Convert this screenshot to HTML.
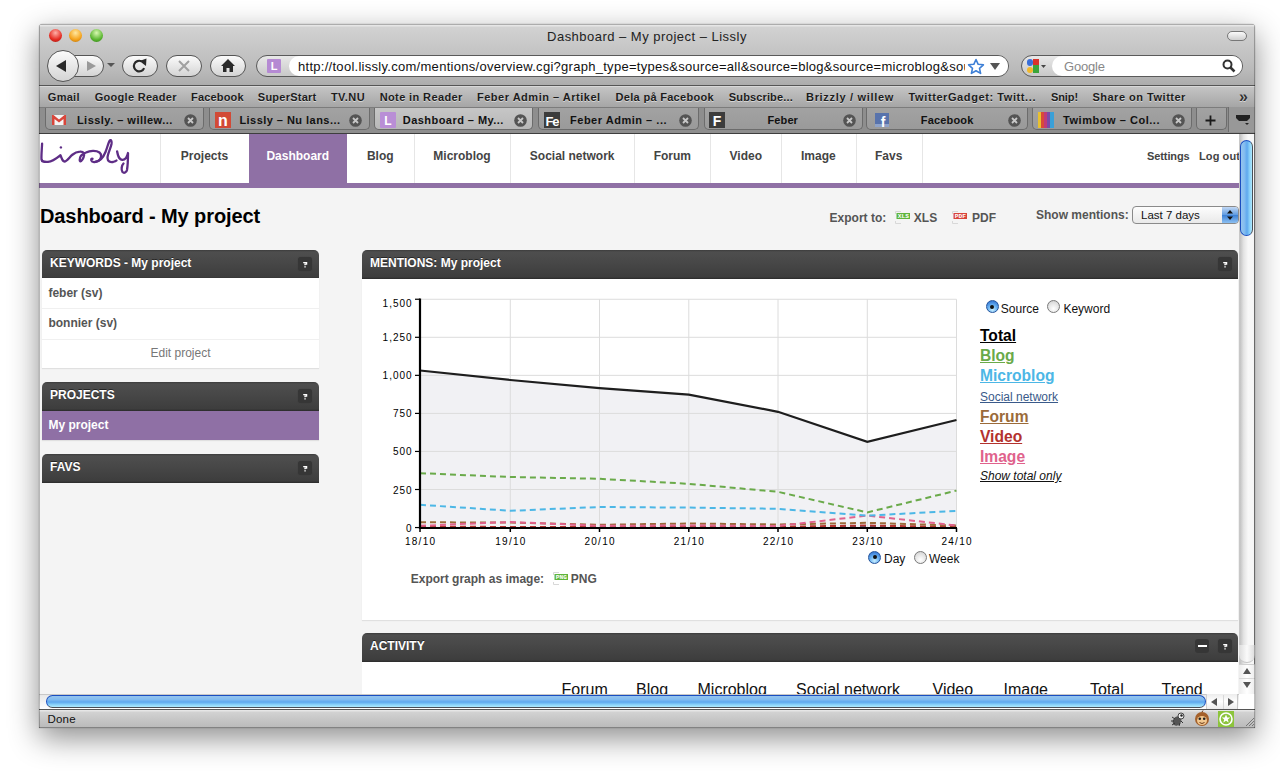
<!DOCTYPE html>
<html><head><meta charset="utf-8">
<style>
*{box-sizing:border-box}
html,body{margin:0;padding:0}
body{width:1280px;height:782px;background:#fff;position:relative;overflow:hidden;font-family:"Liberation Sans",sans-serif}
.a{position:absolute}
#win{left:39px;top:24px;width:1216px;height:703.5px;background:#a8a8a8;border-radius:4px 4px 0 0;box-shadow:0 0 1px rgba(0,0,0,.5),0 10px 30px rgba(0,0,0,.45);overflow:hidden}
#tb{left:0;top:0;width:1216px;height:62px;background:linear-gradient(#acacac 0,#acacac 1px,#e6e6e6 1px,#e6e6e6 2px,#d2d2d2 3px,#bababa 75%,#acacac);border-bottom:1px solid #555}
#bm{left:0;top:62px;width:1216px;height:21px;background:linear-gradient(#c4c4c4,#a6a6a6);border-top:1px solid #d8d8d8}
#tabs{z-index:2;left:0;top:83px;width:1216px;height:26.5px;background:#8e8e8e;border-top:1px solid #7c7c7c;border-bottom:1px solid #3e3e3e}
#content{left:0;top:109px;width:1200px;height:561px;background:#f4f4f4;overflow:hidden}
#vscroll{left:1200px;top:109px;width:16px;height:561px;background:linear-gradient(90deg,#c2c2c2,#e4e4e4 25%,#f8f8f8 55%,#f6f6f6 90%,#8c8c8c 94%);border-left:1px solid #c8c8c8}
#hscroll{left:0;top:670px;width:1200px;height:15px;background:linear-gradient(#e8e8e8,#fff);border-top:1px solid #c8c8c8}
#status{left:0;top:685px;width:1216px;height:18.5px;background:linear-gradient(#e6e6e6 0,#e6e6e6 1px,#d2d2d2 2px,#b9b9b9);border-top:1px solid #555;font-size:11px;color:#111}
.btn{background:linear-gradient(#fbfbfb,#d4d4d4);border:1px solid #555;border-radius:12px}
.bmi{top:0;font-size:11px;font-weight:bold;color:#1c1c1c;line-height:21px;text-shadow:0 1px 0 rgba(255,255,255,.5)}
.tab{top:0;height:21.5px;background:linear-gradient(#a2a2a2,#9a9a9a);border:1px solid #6c6c6c;border-top:none;border-radius:0 0 5px 5px;font-size:12px;color:#111;line-height:20px}
.tab.act{background:linear-gradient(#c6c6c6,#b8b8b8)}
.tabt{top:3.8px;font-size:11px;font-weight:bold;color:#111;line-height:16px;white-space:nowrap}
.nv{font-size:12px;font-weight:bold;color:#444;line-height:16px;white-space:nowrap}
.gt{font-size:12px;font-weight:bold;color:#555;line-height:14px;white-space:nowrap}
.hd{height:28.5px;border-radius:5px 5px 0 0;background:linear-gradient(#3c3c3c 0,#4e4e4e 2px,#484848 40%,#3d3d3d 93%,#2a2a2a 100%);color:#fff;font-size:12px;font-weight:bold;line-height:14px;padding:6px 0 0 8px;text-shadow:0 -1px 0 rgba(0,0,0,.5)}
.hp{width:14px;height:14px;border-radius:3px;background:#363636;box-shadow:0 0 1px #363636}
.yl{font-size:10px;letter-spacing:1px;color:#000;line-height:12px;white-space:nowrap}
.xl{width:60px;text-align:center;font-size:10px;letter-spacing:1.3px;color:#000;line-height:12px;white-space:nowrap;text-indent:1.3px}
.rt{font-size:12px;color:#111;line-height:14px;white-space:nowrap}
.lg{font-size:15.6px;font-weight:bold;line-height:18px;text-decoration:underline;white-space:nowrap}
.tx{position:absolute;width:14px;height:14px;border-radius:7px;background:#666;color:#c8c8c8;font-size:11px;line-height:14px;text-align:center;top:3px}
</style></head><body>
<div id="win" class="a">
 <div id="tb" class="a">
  <div class="a" style="left:10px;top:5px;width:13px;height:13px;border-radius:50%;background:radial-gradient(circle at 50% 30%,#ffb0a8,#e52b22 60%,#9a1a10)"></div>
  <div class="a" style="left:30px;top:5px;width:13px;height:13px;border-radius:50%;background:radial-gradient(circle at 50% 30%,#ffe8a0,#f5a31c 60%,#b06a08)"></div>
  <div class="a" style="left:51px;top:5px;width:13px;height:13px;border-radius:50%;background:radial-gradient(circle at 50% 30%,#d8f8b0,#5cb732 60%,#2e7a14)"></div>
  <div class="a" style="left:0;top:5.5px;width:1216px;text-align:center;font-size:13px;color:#222;line-height:14px;padding-left:0px;letter-spacing:0.48px">Dashboard – My project – Lissly</div>
  <div class="a" style="left:1188px;top:7px;width:20px;height:10px;border-radius:5px;border:1px solid #777;background:linear-gradient(#fafafa,#cfcfcf)"></div>
  <!-- nav buttons -->
  <div class="a btn" style="left:31px;top:31px;width:34px;height:22px;border-radius:0 11px 11px 0"></div>
  <svg class="a" style="left:45px;top:36px" width="14" height="12"><path d="M3 1 L12 6 L3 11 Z" fill="#9a9a9a"/></svg>
  <div class="a btn" style="left:8px;top:26px;width:32px;height:32px;border-radius:50%"></div>
  <svg class="a" style="left:15px;top:35px" width="16" height="14"><path d="M12 1 L2 7 L12 13 Z" fill="#2a2a2a"/></svg>
  <svg class="a" style="left:67px;top:38px" width="10" height="6"><path d="M1 1 L9 1 L5 5 Z" fill="#555"/></svg>
  <div class="a btn" style="left:83px;top:31px;width:36px;height:22px"></div>
  <svg class="a" style="left:92px;top:33px" width="18" height="18"><path d="M13.1 11.1 A5.3 5.3 0 1 1 10.5 4.3" fill="none" stroke="#2a2a2a" stroke-width="2.2"/><path d="M8.5 4 L15.5 1.5 L15 9 Z" fill="#2a2a2a"/></svg>
  <div class="a btn" style="left:127px;top:31px;width:36px;height:22px"></div>
  <svg class="a" style="left:138px;top:35px" width="14" height="14"><path d="M2 2 L12 12 M12 2 L2 12" stroke="#a0a0a0" stroke-width="2"/></svg>
  <div class="a btn" style="left:171px;top:31px;width:36px;height:22px"></div>
  <svg class="a" style="left:181px;top:34px" width="16" height="15"><path d="M8 1 L15 8 L13 8 L13 14 L9.5 14 L9.5 10 L6.5 10 L6.5 14 L3 14 L3 8 L1 8 Z" fill="#2a2a2a"/></svg>
  <!-- url bar -->
  <div class="a" style="left:217px;top:31px;width:753px;height:22px;border-radius:11px;border:1px solid #5a5a5a;background:linear-gradient(#e8e8e8,#c8c8c8)"></div>
  <div class="a" style="left:250px;top:32px;width:719px;height:20px;border-radius:10px;background:#fff"></div>
  <div class="a" style="left:228px;top:35px;width:14px;height:14px;background:#b58ad3;color:#fff;font-size:11px;font-weight:bold;line-height:14px;text-align:center;border-radius:1px">L</div>
  <div class="a" style="left:259px;top:35px;width:667px;overflow:hidden;white-space:nowrap;font-size:13px;color:#111;line-height:16px;letter-spacing:0.28px">http://tool.lissly.com/mentions/overview.cgi?graph_type=types&amp;source=all&amp;source=blog&amp;source=microblog&amp;source</div>
  <svg class="a" style="left:928px;top:34px" width="18" height="17"><path d="M9 1.5 L11.2 6.3 L16.4 6.8 L12.5 10.3 L13.6 15.4 L9 12.8 L4.4 15.4 L5.5 10.3 L1.6 6.8 L6.8 6.3 Z" fill="none" stroke="#3d7fd6" stroke-width="1.6" stroke-linejoin="round"/></svg>
  <svg class="a" style="left:950px;top:38px" width="12" height="9"><path d="M1 1 L11 1 L6 8 Z" fill="#555"/></svg>
  <!-- search -->
  <div class="a" style="left:982px;top:31px;width:222px;height:22px;border-radius:11px;border:1px solid #5a5a5a;background:linear-gradient(#e8e8e8,#c8c8c8)"></div>
  <div class="a" style="left:1013px;top:32px;width:190px;height:20px;border-radius:10px;background:#fff"></div>
  <svg class="a" style="left:987px;top:34px" width="22" height="16"><rect x="1" y="1" width="6" height="7" rx="3" fill="#3a6fd8"/><rect x="7" y="1" width="6" height="6" fill="#d8322a"/><rect x="7" y="7" width="6" height="8" fill="#3aa53a"/><rect x="1" y="9" width="6" height="6" rx="3" fill="#f2b82a"/><path d="M15 7 L20 7 L17.5 10 Z" fill="#444"/></svg>
  <div class="a" style="left:1025px;top:35px;font-size:13px;color:#888;line-height:16px;letter-spacing:-0.2px">Google</div>
  <svg class="a" style="left:1183px;top:35px" width="14" height="14"><circle cx="5.5" cy="5.5" r="4" fill="none" stroke="#333" stroke-width="2"/><path d="M8.5 8.5 L12.5 12.5" stroke="#333" stroke-width="2.5"/></svg>
 </div>
 <div id="bm" class="a">
  <div class="a bmi" style="left:8.8px;letter-spacing:0.28px">Gmail</div>
  <div class="a bmi" style="left:55.7px;letter-spacing:0.29px">Google Reader</div>
  <div class="a bmi" style="left:152.0px;letter-spacing:0.17px">Facebook</div>
  <div class="a bmi" style="left:218.8px;letter-spacing:0.25px">SuperStart</div>
  <div class="a bmi" style="left:292.0px;letter-spacing:0.40px">TV.NU</div>
  <div class="a bmi" style="left:340.7px;letter-spacing:0.38px">Note in Reader</div>
  <div class="a bmi" style="left:438.0px;letter-spacing:0.51px">Feber Admin – Artikel</div>
  <div class="a bmi" style="left:576.6px;letter-spacing:0.30px">Dela på Facebook</div>
  <div class="a bmi" style="left:689.8px;letter-spacing:0.14px">Subscribe...</div>
  <div class="a bmi" style="left:767.0px;letter-spacing:0.69px">Brizzly / willew</div>
  <div class="a bmi" style="left:869.6px;letter-spacing:0.59px">TwitterGadget: Twitt...</div>
  <div class="a bmi" style="left:1012.0px;letter-spacing:-0.10px">Snip!</div>
  <div class="a bmi" style="left:1053.4px;letter-spacing:0.51px">Share on Twitter</div>
  <div class="a bmi" style="left:1200px;font-size:16px;font-weight:bold;top:-1px;color:#333">»</div>
 </div>
 <div id="tabs" class="a">
  <div class="a tab" style="left:5.7px;width:159.3px"></div>
  <div class="a" style="left:12.0px;top:4px;width:16px;height:16px"><svg width="16" height="16"><rect x="1" y="3" width="14" height="10" fill="#f4f4f4"/><path d="M1 3 L1 13 L3.5 13 L3.5 7 L8 10.5 L12.5 7 L12.5 13 L15 13 L15 3 L13.5 3 L8 7.5 L2.5 3 Z" fill="#d9463b"/></svg></div>
  <div class="a tabt" style="left:37.9px;letter-spacing:0.48px">Lissly. – willew...</div>
  <div class="a" style="left:145.4px;top:5px;width:13px;height:13px"><svg width="13" height="13"><circle cx="6.5" cy="6.5" r="6.3" fill="#545454"/><path d="M4 4 L9 9 M9 4 L4 9" stroke="#c8c8c8" stroke-width="1.8"/></svg></div>
  <div class="a tab" style="left:169.8px;width:160.9px"></div>
  <div class="a" style="left:176.0px;top:4px;width:16px;height:16px"><svg width="16" height="16"><rect x="0" y="0" width="16" height="16" fill="#d24a36"/><text x="8" y="14" font-family="Liberation Sans" font-weight="bold" font-size="16" fill="#fff" text-anchor="middle">n</text></svg></div>
  <div class="a tabt" style="left:200.4px;letter-spacing:0.46px">Lissly – Nu lans...</div>
  <div class="a" style="left:310.4px;top:5px;width:13px;height:13px"><svg width="13" height="13"><circle cx="6.5" cy="6.5" r="6.3" fill="#545454"/><path d="M4 4 L9 9 M9 4 L4 9" stroke="#c8c8c8" stroke-width="1.8"/></svg></div>
  <div class="a tab act" style="left:335.0px;width:159.4px"></div>
  <div class="a" style="left:341.0px;top:4px;width:16px;height:16px"><svg width="16" height="16"><rect x="0" y="0" width="16" height="16" rx="1" fill="#b98ed6"/><text x="8" y="13" font-family="Liberation Sans" font-weight="bold" font-size="12" fill="#fff" text-anchor="middle">L</text></svg></div>
  <div class="a tabt" style="left:363.8px;letter-spacing:0.45px">Dashboard – My...</div>
  <div class="a" style="left:474.8px;top:5px;width:13px;height:13px"><svg width="13" height="13"><circle cx="6.5" cy="6.5" r="6.3" fill="#545454"/><path d="M4 4 L9 9 M9 4 L4 9" stroke="#c8c8c8" stroke-width="1.8"/></svg></div>
  <div class="a tab" style="left:499.0px;width:161.0px"></div>
  <div class="a" style="left:504.8px;top:4px;width:16px;height:16px"><svg width="16" height="16"><rect x="0" y="0" width="16" height="16" fill="#3c3c3c"/><text x="8" y="14" font-family="Liberation Sans" font-weight="bold" font-size="13" fill="#fff" text-anchor="middle" letter-spacing="-1">Fe</text></svg></div>
  <div class="a tabt" style="left:531.0px;letter-spacing:0.52px">Feber Admin – ...</div>
  <div class="a" style="left:639.8px;top:5px;width:13px;height:13px"><svg width="13" height="13"><circle cx="6.5" cy="6.5" r="6.3" fill="#545454"/><path d="M4 4 L9 9 M9 4 L4 9" stroke="#c8c8c8" stroke-width="1.8"/></svg></div>
  <div class="a tab" style="left:664.8px;width:159.1px"></div>
  <div class="a" style="left:670.4px;top:4px;width:16px;height:16px"><svg width="16" height="16"><rect x="0" y="0" width="16" height="16" fill="#3c3c3c"/><text x="8" y="14" font-family="Liberation Sans" font-weight="bold" font-size="14" fill="#fff" text-anchor="middle">F</text></svg></div>
  <div class="a tabt" style="left:728.5px;letter-spacing:0.11px">Feber</div>
  <div class="a" style="left:804.0px;top:5px;width:13px;height:13px"><svg width="13" height="13"><circle cx="6.5" cy="6.5" r="6.3" fill="#545454"/><path d="M4 4 L9 9 M9 4 L4 9" stroke="#c8c8c8" stroke-width="1.8"/></svg></div>
  <div class="a tab" style="left:827.4px;width:161.6px"></div>
  <div class="a" style="left:835.0px;top:4px;width:16px;height:16px"><svg width="16" height="16"><rect x="1" y="1" width="14" height="14" fill="#5873ac"/><rect x="1" y="12" width="14" height="3" fill="#8fa3c9"/><text x="9" y="15" font-family="Liberation Sans" font-weight="bold" font-size="14" fill="#fff" text-anchor="middle">f</text></svg></div>
  <div class="a tabt" style="left:881.8px;letter-spacing:0.17px">Facebook</div>
  <div class="a" style="left:969.0px;top:5px;width:13px;height:13px"><svg width="13" height="13"><circle cx="6.5" cy="6.5" r="6.3" fill="#545454"/><path d="M4 4 L9 9 M9 4 L4 9" stroke="#c8c8c8" stroke-width="1.8"/></svg></div>
  <div class="a tab" style="left:992.5px;width:160.5px"></div>
  <div class="a" style="left:999.0px;top:4px;width:16px;height:16px"><svg width="16" height="16"><rect x="0" y="0" width="3" height="16" fill="#e8c030"/><rect x="3" y="0" width="3" height="16" fill="#d84a3a"/><rect x="6" y="0" width="3" height="16" fill="#c03a78"/><rect x="9" y="0" width="3" height="16" fill="#7a4aa8"/><rect x="12" y="0" width="4" height="16" fill="#3aa0d8"/></svg></div>
  <div class="a tabt" style="left:1024.0px;letter-spacing:0.54px">Twimbow – Col...</div>
  <div class="a" style="left:1133.0px;top:5px;width:13px;height:13px"><svg width="13" height="13"><circle cx="6.5" cy="6.5" r="6.3" fill="#545454"/><path d="M4 4 L9 9 M9 4 L4 9" stroke="#c8c8c8" stroke-width="1.8"/></svg></div>
  <div class="a tab" style="left:1156.5px;width:31px"></div>
  <svg class="a" style="left:1164px;top:5px" width="15" height="15"><path d="M7.5 2.5 V12.5 M2.5 7.5 H12.5" stroke="#1a1a1a" stroke-width="1.8"/></svg>
  <div class="a" style="left:1188.5px;top:-1px;width:28px;height:25px;background:#989898;border-left:1px solid #6e6e6e"></div>
  <svg class="a" style="left:1196px;top:4px" width="16" height="16"><path d="M1 3 H15 V6 L12 9 H4 L1 6 Z" fill="#222"/><path d="M10 11 H14 L12 13 Z" fill="#222"/></svg>
 </div>
 <div id="content" class="a"><div class="a" style="left:-39px;top:-133px;width:1280px;height:782px">
  <!-- nav -->
  <div class="a" style="left:39px;top:133px;width:1200px;height:50px;background:#fff"></div>
  <div class="a" style="left:39px;top:183px;width:1200px;height:5px;background:#8f70a5"></div>
  <div class="a" style="left:249px;top:133px;width:97.5px;height:50px;background:#8f70a5"></div>
  <div class="a" style="left:160px;top:133px;width:1px;height:50px;background:#e6e6e6"></div><div class="a" style="left:414px;top:133px;width:1px;height:50px;background:#e6e6e6"></div><div class="a" style="left:510px;top:133px;width:1px;height:50px;background:#e6e6e6"></div><div class="a" style="left:634.4px;top:133px;width:1px;height:50px;background:#e6e6e6"></div><div class="a" style="left:710.3px;top:133px;width:1px;height:50px;background:#e6e6e6"></div><div class="a" style="left:781.25px;top:133px;width:1px;height:50px;background:#e6e6e6"></div><div class="a" style="left:855.5px;top:133px;width:1px;height:50px;background:#e6e6e6"></div><div class="a" style="left:921.9px;top:133px;width:1px;height:50px;background:#e6e6e6"></div>
  <div class="a nv" style="left:160px;width:89px;top:147.5px;text-align:center;">Projects</div><div class="a nv" style="left:249px;width:97.5px;top:147.5px;text-align:center;color:#fff">Dashboard</div><div class="a nv" style="left:346.5px;width:67.5px;top:147.5px;text-align:center;">Blog</div><div class="a nv" style="left:414px;width:96px;top:147.5px;text-align:center;">Microblog</div><div class="a nv" style="left:510px;width:124.39999999999998px;top:147.5px;text-align:center;">Social network</div><div class="a nv" style="left:634.4px;width:75.89999999999998px;top:147.5px;text-align:center;">Forum</div><div class="a nv" style="left:710.3px;width:70.95000000000005px;top:147.5px;text-align:center;">Video</div><div class="a nv" style="left:781.25px;width:74.25px;top:147.5px;text-align:center;">Image</div><div class="a nv" style="left:855.5px;width:66.39999999999998px;top:147.5px;text-align:center;">Favs</div>
  <div class="a nv" style="left:1147px;top:147.5px;font-size:11px;letter-spacing:-0.1px">Settings</div>
  <div class="a nv" style="left:1199px;top:147.5px;font-size:11px;letter-spacing:0.1px">Log out</div>
  <svg class="a" style="left:39px;top:133px" width="130" height="50" viewBox="39 133 130 50"><g fill="none" stroke="#5e2d86" stroke-width="2.3" stroke-linecap="round" stroke-linejoin="round">
   <path d="M42.1,143.6 C41.8,150 41.2,156 41.5,159.5 C41.8,162 44,162 48,161.8 C53,161.5 57,158 60.4,155.2 C61.5,157 62,161.5 64.4,161.5 C67,161.5 70,156.5 72,155 C75,152.5 77,151.7 80,151.7 C84,151.5 85,154 83.5,157.5 C82,161 80,162.5 79.7,160 C79.5,157 82,154 86,152.5 C90,150.5 96,150 99.5,152.5 C102,154.5 101.5,158.5 98.5,160.8 C95.5,162.8 92,162.3 91.3,160.3 C91,159 91.8,158.3 92.5,158.8"/>
   <path d="M95,161.8 C100,161.5 103.5,157 105.5,152 C107.5,147 108.5,142 109.8,140.5 C111,139.5 112,141 111.5,144 C110.5,149 107.5,154 107.5,158 C107.5,161.5 110.5,162.5 113,162 C115,161.5 116,161 116.5,160.5"/>
   <path d="M117.1,151.3 C117.8,155 118.5,159.5 122.5,159.8 C126,160 127.5,155 128,153 C128,158 127.8,165 127,170 C126.5,172.5 124,173.5 122.5,172 C121,170 121.5,165.5 123.5,163.5"/>
  </g><circle cx="60.9" cy="147.4" r="1.2" fill="#5e2d86"/></svg>
  <!-- title -->
  <div class="a" style="left:40px;top:205px;font-size:20px;font-weight:bold;color:#000;line-height:22px;letter-spacing:-0.1px">Dashboard - My project</div>
  <div class="a gt" style="left:829.6px;top:211px">Export to:</div>
  <svg class="a" style="left:895px;top:211px" width="16" height="13"><path d="M0.5 3 V0.5 H6 M0.5 10 V12.5 H6" fill="none" stroke="#d8d8d8" stroke-width="1"/><rect x="1.5" y="2" width="13.5" height="6" fill="#5fb53c"/><text x="8.3" y="7.3" font-family="Liberation Mono" font-size="6.2" font-weight="bold" fill="#fff" text-anchor="middle">XLS</text></svg>
  <div class="a gt" style="left:913.8px;top:211px">XLS</div>
  <svg class="a" style="left:952px;top:211px" width="16" height="13"><path d="M0.5 3 V0.5 H6 M0.5 10 V12.5 H6" fill="none" stroke="#d8d8d8" stroke-width="1"/><rect x="1.5" y="2" width="13.5" height="6" fill="#d8443a"/><text x="8.3" y="7.3" font-family="Liberation Mono" font-size="6.2" font-weight="bold" fill="#fff" text-anchor="middle">PDF</text></svg>
  <div class="a gt" style="left:972px;top:211px">PDF</div>
  <div class="a gt" style="left:1036px;top:207.5px">Show mentions:</div>
  <div class="a" style="left:1132px;top:206px;width:107px;height:18px;border:1px solid #8a8a8a;border-radius:4px;background:linear-gradient(#fdfdfd,#e9e9e9);font-size:11.5px;line-height:16px;padding-left:8px;color:#111">Last 7 days</div>
  <div class="a" style="left:1222px;top:207px;width:16px;height:16px;border-radius:0 3px 3px 0;background:linear-gradient(#c2d8f4,#5d9ae0 50%,#3b7fd4 51%,#8cc0f2)"></div>
  <svg class="a" style="left:1225px;top:208px" width="10" height="14"><path d="M2 5.5 L5 2 L8 5.5 Z M2 8.5 L5 12 L8 8.5 Z" fill="#111"/></svg>
  <!-- keywords panel -->
  <div class="a hd" style="left:42px;top:250px;width:277px">KEYWORDS - My project</div>
  <div class="a hp" style="left:298.4px;top:256.6px"><svg width="14" height="14"><path d="M5.2 5.6 H8.6 V7.2 H7 V8.2" fill="none" stroke="#fff" stroke-width="1.3"/><rect x="6.4" y="9.2" width="1.3" height="1.3" fill="#fff"/></svg></div>
  <div class="a" style="left:42px;top:278px;width:277px;height:90px;background:#fff;box-shadow:0 1px 1px rgba(0,0,0,.08)"></div>
  <div class="a" style="left:42px;top:308px;width:277px;height:1px;background:#f0f0f0"></div>
  <div class="a" style="left:42px;top:338.5px;width:277px;height:1px;background:#f0f0f0"></div>
  <div class="a gt" style="left:48.4px;top:285.5px">feber (sv)</div>
  <div class="a gt" style="left:48.4px;top:315.5px">bonnier (sv)</div>
  <div class="a" style="left:42px;top:345.5px;width:277px;text-align:center;font-size:12px;color:#777;line-height:14px">Edit project</div>
  <!-- projects -->
  <div class="a hd" style="left:42px;top:382px;width:277px">PROJECTS</div>
  <div class="a hp" style="left:298.4px;top:388.6px"><svg width="14" height="14"><path d="M5.2 5.6 H8.6 V7.2 H7 V8.2" fill="none" stroke="#fff" stroke-width="1.3"/><rect x="6.4" y="9.2" width="1.3" height="1.3" fill="#fff"/></svg></div>
  <div class="a" style="left:42px;top:410.6px;width:277px;height:29px;background:#8f70a5;box-shadow:0 1px 1px rgba(0,0,0,.08)"></div>
  <div class="a" style="left:48.4px;top:417.5px;font-size:12px;font-weight:bold;color:#fff;line-height:14px">My project</div>
  <!-- favs -->
  <div class="a hd" style="left:42px;top:454px;width:277px">FAVS</div>
  <div class="a hp" style="left:298.4px;top:460.6px"><svg width="14" height="14"><path d="M5.2 5.6 H8.6 V7.2 H7 V8.2" fill="none" stroke="#fff" stroke-width="1.3"/><rect x="6.4" y="9.2" width="1.3" height="1.3" fill="#fff"/></svg></div>
  <!-- mentions -->
  <div class="a hd" style="left:362px;top:250px;width:876px">MENTIONS: My project</div>
  <div class="a hp" style="left:1217.5px;top:256.6px"><svg width="14" height="14"><path d="M5.2 5.6 H8.6 V7.2 H7 V8.2" fill="none" stroke="#fff" stroke-width="1.3"/><rect x="6.4" y="9.2" width="1.3" height="1.3" fill="#fff"/></svg></div>
  <div class="a" style="left:362px;top:278.5px;width:876px;height:341.5px;background:#fff;box-shadow:0 1px 1px rgba(0,0,0,.08)"></div>
  <svg class="a" style="left:0;top:0" width="1280" height="782"><polygon points="420.0,370.5 510.3,380.0 599.5,388.2 688.8,394.7 778.0,411.8 867.3,441.8 956.5,420.0 956.5,527.55 420.0,527.55" fill="#f1f1f4"/><line x1="420" y1="527.55" x2="956.5" y2="527.55" stroke="#dcdcdc" stroke-width="1"/><line x1="420" y1="489.50" x2="956.5" y2="489.50" stroke="#dcdcdc" stroke-width="1"/><line x1="420" y1="451.45" x2="956.5" y2="451.45" stroke="#dcdcdc" stroke-width="1"/><line x1="420" y1="413.40" x2="956.5" y2="413.40" stroke="#dcdcdc" stroke-width="1"/><line x1="420" y1="375.35" x2="956.5" y2="375.35" stroke="#dcdcdc" stroke-width="1"/><line x1="420" y1="337.30" x2="956.5" y2="337.30" stroke="#dcdcdc" stroke-width="1"/><line x1="420" y1="299.25" x2="956.5" y2="299.25" stroke="#dcdcdc" stroke-width="1"/><line x1="510.3" y1="299.25" x2="510.3" y2="527.55" stroke="#dcdcdc" stroke-width="1"/><line x1="599.5" y1="299.25" x2="599.5" y2="527.55" stroke="#dcdcdc" stroke-width="1"/><line x1="688.8" y1="299.25" x2="688.8" y2="527.55" stroke="#dcdcdc" stroke-width="1"/><line x1="778.0" y1="299.25" x2="778.0" y2="527.55" stroke="#dcdcdc" stroke-width="1"/><line x1="867.3" y1="299.25" x2="867.3" y2="527.55" stroke="#dcdcdc" stroke-width="1"/><line x1="956.5" y1="299.25" x2="956.5" y2="527.55" stroke="#dcdcdc" stroke-width="1"/><polyline points="420.0,527.0 510.3,527.0 599.5,527.0 688.8,527.0 778.0,527.0 867.3,527.0 956.5,527.0" fill="none" stroke="#3a5a8a" stroke-width="2" stroke-dasharray="6,4"/><polyline points="420.0,526.5 510.3,527.0 599.5,526.8 688.8,526.8 778.0,526.8 867.3,525.5 956.5,527.0" fill="none" stroke="#b3322e" stroke-width="2" stroke-dasharray="6,4"/><polyline points="420.0,522.3 510.3,522.5 599.5,524.8 688.8,523.5 778.0,524.5 867.3,522.8 956.5,525.5" fill="none" stroke="#9b6b3a" stroke-width="2" stroke-dasharray="6,4"/><polyline points="420.0,525.8 510.3,522.0 599.5,525.8 688.8,525.5 778.0,526.0 867.3,515.6 956.5,525.5" fill="none" stroke="#e0628c" stroke-width="2" stroke-dasharray="6,4"/><polyline points="420.0,504.8 510.3,510.8 599.5,507.0 688.8,507.6 778.0,508.8 867.3,515.6 956.5,510.9" fill="none" stroke="#4cb7e6" stroke-width="2" stroke-dasharray="6,4"/><polyline points="420.0,473.2 510.3,477.0 599.5,478.8 688.8,483.8 778.0,491.8 867.3,512.4 956.5,490.6" fill="none" stroke="#6aaa4a" stroke-width="2" stroke-dasharray="6,4"/><polyline points="420.0,370.5 510.3,380.0 599.5,388.2 688.8,394.7 778.0,411.8 867.3,441.8 956.5,420.0" fill="none" stroke="#1e1e1e" stroke-width="2.2"/><line x1="420" y1="298.5" x2="420" y2="529" stroke="#000" stroke-width="2.2"/><line x1="419" y1="528" x2="957" y2="528" stroke="#000" stroke-width="2.2"/><line x1="415" y1="527.55" x2="420" y2="527.55" stroke="#000" stroke-width="1.2"/><line x1="415" y1="489.50" x2="420" y2="489.50" stroke="#000" stroke-width="1.2"/><line x1="415" y1="451.45" x2="420" y2="451.45" stroke="#000" stroke-width="1.2"/><line x1="415" y1="413.40" x2="420" y2="413.40" stroke="#000" stroke-width="1.2"/><line x1="415" y1="375.35" x2="420" y2="375.35" stroke="#000" stroke-width="1.2"/><line x1="415" y1="337.30" x2="420" y2="337.30" stroke="#000" stroke-width="1.2"/><line x1="415" y1="299.25" x2="420" y2="299.25" stroke="#000" stroke-width="1.2"/><line x1="420.0" y1="528" x2="420.0" y2="532" stroke="#000" stroke-width="1.5"/><line x1="510.3" y1="528" x2="510.3" y2="532" stroke="#000" stroke-width="1.5"/><line x1="599.5" y1="528" x2="599.5" y2="532" stroke="#000" stroke-width="1.5"/><line x1="688.8" y1="528" x2="688.8" y2="532" stroke="#000" stroke-width="1.5"/><line x1="778.0" y1="528" x2="778.0" y2="532" stroke="#000" stroke-width="1.5"/><line x1="867.3" y1="528" x2="867.3" y2="532" stroke="#000" stroke-width="1.5"/><line x1="956.5" y1="528" x2="956.5" y2="532" stroke="#000" stroke-width="1.5"/></svg>
  <div class="a yl" style="right:867.4px;top:522.5px">0</div><div class="a yl" style="right:867.4px;top:484.5px">250</div><div class="a yl" style="right:867.4px;top:446.4px">500</div><div class="a yl" style="right:867.4px;top:408.4px">750</div><div class="a yl" style="right:867.4px;top:370.3px">1,000</div><div class="a yl" style="right:867.4px;top:332.3px">1,250</div><div class="a yl" style="right:867.4px;top:298px">1,500</div><div class="a xl" style="left:390.0px;top:536.3px">18/10</div><div class="a xl" style="left:480.3px;top:536.3px">19/10</div><div class="a xl" style="left:569.5px;top:536.3px">20/10</div><div class="a xl" style="left:658.8px;top:536.3px">21/10</div><div class="a xl" style="left:748.0px;top:536.3px">22/10</div><div class="a xl" style="left:837.3px;top:536.3px">23/10</div><div class="a xl" style="left:926.5px;top:536.3px">24/10</div>
  <div class="a" style="left:868px;top:550.7px;width:13px;height:13px;border-radius:50%;border:1px solid #24549c;background:radial-gradient(circle at 50% 80%,#c8eeff,#6ab2f2 45%,#2f70d0 90%)"></div>
  <div class="a" style="left:872.5px;top:555.2px;width:4px;height:4px;border-radius:50%;background:#111"></div>
  <div class="a rt" style="left:884px;top:552px">Day</div>
  <div class="a" style="left:914px;top:550.7px;width:13px;height:13px;border-radius:50%;border:1px solid #7a7a7a;background:radial-gradient(circle at 50% 70%,#fff,#e2e2e2 60%,#c8c8c8)"></div>
  <div class="a rt" style="left:929px;top:552px">Week</div>
  <div class="a gt" style="left:410.75px;top:572px">Export graph as image:</div>
  <svg class="a" style="left:552.5px;top:572px" width="16" height="13"><path d="M0.5 3 V0.5 H6 M0.5 10 V12.5 H6" fill="none" stroke="#d8d8d8" stroke-width="1"/><rect x="1.5" y="2" width="13.5" height="6" fill="#5fb53c"/><text x="8.3" y="7.3" font-family="Liberation Mono" font-size="6.2" font-weight="bold" fill="#fff" text-anchor="middle">PNG</text></svg>
  <div class="a gt" style="left:570.75px;top:572px">PNG</div>
  <div class="a" style="left:985.5px;top:300.3px;width:13px;height:13px;border-radius:50%;border:1px solid #24549c;background:radial-gradient(circle at 50% 80%,#c8eeff,#6ab2f2 45%,#2f70d0 90%)"></div>
  <div class="a" style="left:990px;top:304.8px;width:4px;height:4px;border-radius:50%;background:#111"></div>
  <div class="a rt" style="left:1000.8px;top:302px">Source</div>
  <div class="a" style="left:1047.3px;top:300.3px;width:13px;height:13px;border-radius:50%;border:1px solid #7a7a7a;background:radial-gradient(circle at 50% 70%,#fff,#e2e2e2 60%,#c8c8c8)"></div>
  <div class="a rt" style="left:1063.4px;top:302px">Keyword</div>
  <div class="a lg" style="left:980px;top:327.0px;color:#000">Total</div>
  <div class="a lg" style="left:980px;top:347.0px;color:#6aaa4a">Blog</div>
  <div class="a lg" style="left:980px;top:367.0px;color:#4cb7e6">Microblog</div>
  <div class="a" style="left:980px;top:389.5px;font-size:12px;color:#3a5a8a;line-height:14px;text-decoration:underline">Social network</div>
  <div class="a lg" style="left:980px;top:407.5px;color:#9b6b3a">Forum</div>
  <div class="a lg" style="left:980px;top:427.5px;color:#b3322e">Video</div>
  <div class="a lg" style="left:980px;top:447.5px;color:#e0628c">Image</div>
  <div class="a" style="left:980px;top:469px;font-size:12px;font-style:italic;color:#111;line-height:14px;text-decoration:underline">Show total only</div>
  <!-- activity -->
  <div class="a hd" style="left:362px;top:633px;width:876px">ACTIVITY</div>
  <div class="a hp" style="left:1217.5px;top:639px"><svg width="14" height="14"><path d="M5.2 5.6 H8.6 V7.2 H7 V8.2" fill="none" stroke="#fff" stroke-width="1.3"/><rect x="6.4" y="9.2" width="1.3" height="1.3" fill="#fff"/></svg></div>
  <div class="a" style="left:1195px;top:639px;width:14px;height:14px;border-radius:3px;background:#363636"></div>
  <div class="a" style="left:1198px;top:644.5px;width:8.5px;height:2.5px;background:#fff"></div>
  <div class="a" style="left:362px;top:661.5px;width:876px;height:100px;background:#fff"></div>
  <div class="a" style="left:561.5px;top:680.5px;font-size:16px;color:#111;line-height:18px">Forum</div><div class="a" style="left:636px;top:680.5px;font-size:16px;color:#111;line-height:18px">Blog</div><div class="a" style="left:697.5px;top:680.5px;font-size:16px;color:#111;line-height:18px">Microblog</div><div class="a" style="left:796px;top:680.5px;font-size:16px;color:#111;line-height:18px">Social network</div><div class="a" style="left:932.5px;top:680.5px;font-size:16px;color:#111;line-height:18px">Video</div><div class="a" style="left:1003.5px;top:680.5px;font-size:16px;color:#111;line-height:18px">Image</div><div class="a" style="left:1090px;top:680.5px;font-size:16px;color:#111;line-height:18px">Total</div><div class="a" style="left:1161.5px;top:680.5px;font-size:16px;color:#111;line-height:18px">Trend</div>
</div></div>
 <div id="vscroll" class="a">
  <div class="a" style="left:-0.5px;top:7px;width:13px;height:96px;border-radius:6.5px;border:1px solid #1a4ec0;border-right-color:#4a4f58;background:linear-gradient(90deg,#94c4ee 0,#84bdf0 30%,#5ea8ee 55%,#8cd4fa 80%,#aee8fc 100%)"></div>
  <div class="a" style="left:-1px;top:512px;width:16px;height:18px;border-radius:0 0 8px 8px;background:linear-gradient(90deg,#dcdcdc,#fafafa 50%,#dcdcdc);border-bottom:1px solid #c4c4c4"></div>
  <div class="a" style="left:-1px;top:530.5px;width:16px;height:30px;background:linear-gradient(90deg,#ececec,#fff 50%,#ececec);border-top:1px solid #d0d0d0"></div>
  <div class="a" style="left:-1px;top:544.5px;width:16px;height:1px;background:#d8d8d8"></div>
  <svg class="a" style="left:2px;top:534px" width="10" height="8"><path d="M1 7 L5 1 L9 7 Z" fill="#555"/></svg>
  <svg class="a" style="left:2px;top:548px" width="10" height="8"><path d="M1 1 L5 7 L9 1 Z" fill="#555"/></svg>
 </div>
 <div id="hscroll" class="a">
  <div class="a" style="left:7px;top:-0.5px;width:1160px;height:13.5px;border-radius:7px;border:1px solid #1a4ec0;border-bottom-color:#4a4f58;background:linear-gradient(#94c4ee 0,#84bdf0 30%,#5ea8ee 55%,#8cd4fa 80%,#aee8fc 100%)"></div>
  <div class="a" style="left:1167.4px;top:-1px;width:32px;height:15px;background:linear-gradient(#ececec,#fff 50%,#ececec);border-left:1px solid #d0d0d0;border-right:1px solid #c8c8c8"></div>
  <div class="a" style="left:1183.5px;top:0;width:1px;height:14px;background:#d8d8d8"></div>
  <svg class="a" style="left:1171px;top:2px" width="8" height="10"><path d="M7 1 L1 5 L7 9 Z" fill="#555"/></svg>
  <svg class="a" style="left:1188px;top:2px" width="8" height="10"><path d="M1 1 L7 5 L1 9 Z" fill="#555"/></svg>
  <div class="a" style="left:1200px;top:-1px;width:16px;height:15px;background:#fff"></div>
 </div>
 <div class="a" style="left:0;top:0;width:1216px;height:703.5px;z-index:6;pointer-events:none;box-shadow:inset 1px 0 0 rgba(0,0,0,.25),inset -1px 0 0 rgba(0,0,0,.25),inset 0 -1px 0 rgba(0,0,0,.3)"></div>
 <div id="status" class="a"><span class="a" style="left:8.5px;top:2.5px;font-size:11.5px;letter-spacing:0.2px">Done</span>
  <svg class="a" style="left:1131px;top:1px" width="16" height="16"><ellipse cx="7" cy="10" rx="4" ry="5" transform="rotate(35 7 10)" fill="#555"/><path d="M2 6 L5 8 M1 10 L4 10 M2 14 L5 12 M9 15 L10 12 M13 12 L11 10" stroke="#333" stroke-width="1"/><circle cx="11" cy="5" r="3" fill="#eee" stroke="#444"/><circle cx="11.5" cy="4.5" r="1.2" fill="#222"/></svg>
  <svg class="a" style="left:1155px;top:0px" width="16" height="17"><circle cx="8" cy="9" r="7" fill="#a4602a"/><ellipse cx="8" cy="10.5" rx="5" ry="4.5" fill="#f2c890"/><circle cx="5.8" cy="8.8" r="1.3" fill="#222"/><circle cx="10.2" cy="8.8" r="1.3" fill="#222"/><path d="M5.5 12.5 Q8 14.5 10.5 12.5" stroke="#6a3a1a" fill="none"/><path d="M8 2 L9 0.5" stroke="#6a3a1a"/></svg>
  <div class="a" style="left:1179px;top:1px;width:16px;height:16px;background:#8cc43c"></div>
  <svg class="a" style="left:1179px;top:1px" width="16" height="16"><circle cx="8" cy="8" r="6" fill="none" stroke="#fff" stroke-width="1.6"/><path d="M8 3.5 L9.2 6.5 L12.3 6.6 L9.8 8.5 L10.7 11.5 L8 9.8 L5.3 11.5 L6.2 8.5 L3.7 6.6 L6.8 6.5 Z" fill="#fff"/></svg>
  <svg class="a" style="left:1205px;top:6px" width="11" height="11"><path d="M10 2 L2 10 M10 5 L5 10 M10 8 L8 10" stroke="#777" stroke-width="1"/></svg>
 </div>
</div>
</body></html>
